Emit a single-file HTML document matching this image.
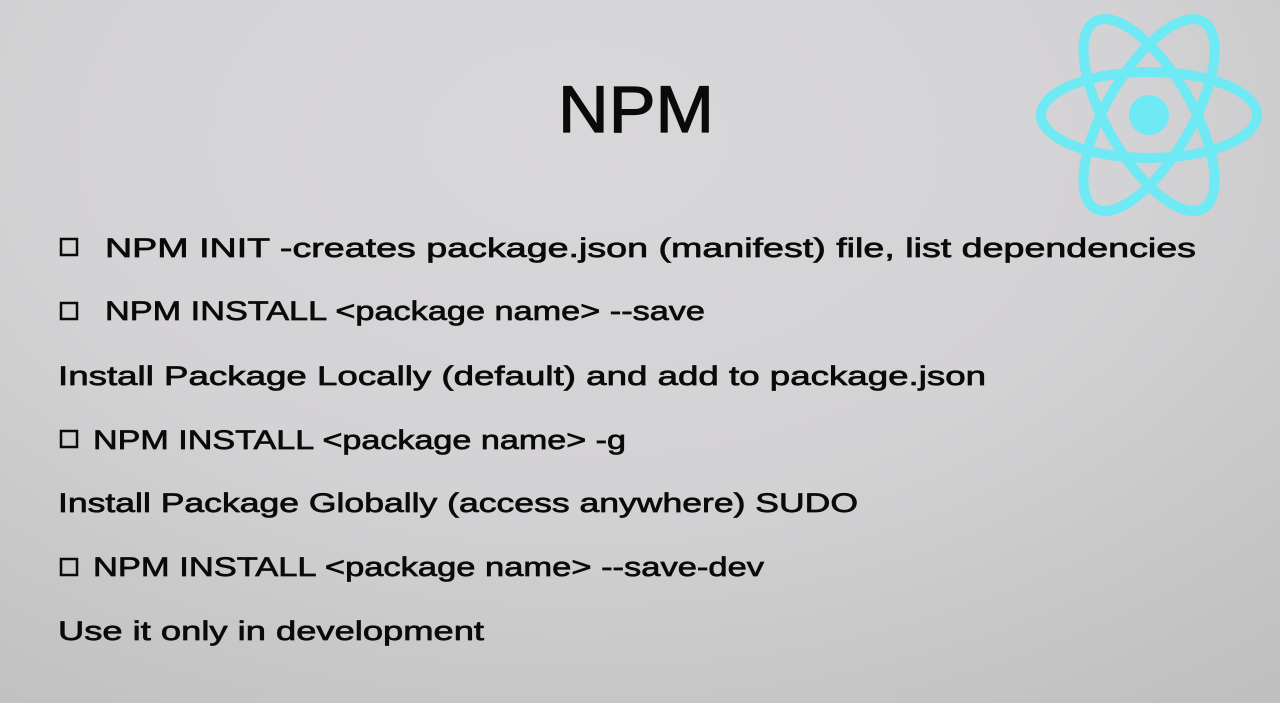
<!DOCTYPE html>
<html><head><style>
html,body{margin:0;padding:0;}
body{width:1280px;height:703px;overflow:hidden;background:radial-gradient(ellipse 1100px 700px at 45% 20%,#d8d7d9 0%,#d3d2d4 50%,#bfbfbf 100%);}
svg{position:absolute;left:0;top:0;}
text{font-family:"Liberation Sans",sans-serif;fill:#0a0a0a;font-size:27px;stroke:#0a0a0a;stroke-width:0.7;}
</style></head><body>
<svg width="1280" height="703" viewBox="0 0 1280 703">
<text x="558" y="132" style="font-size:66px;stroke-width:1.2" textLength="156" lengthAdjust="spacingAndGlyphs">NPM</text>
<g>
<rect x="61" y="239" width="16" height="16" fill="none" stroke="#0a0a0a" stroke-width="2.5"/>
<rect x="61" y="303" width="16" height="16" fill="none" stroke="#0a0a0a" stroke-width="2.5"/>
<rect x="61" y="431" width="16" height="16" fill="none" stroke="#0a0a0a" stroke-width="2.5"/>
<rect x="61" y="559" width="16" height="16" fill="none" stroke="#0a0a0a" stroke-width="2.5"/>
</g>
<text x="105" y="257" textLength="1091" lengthAdjust="spacingAndGlyphs">NPM INIT -creates package.json (manifest) file, list dependencies</text>
<text x="105" y="320" textLength="600" lengthAdjust="spacingAndGlyphs">NPM INSTALL &lt;package name&gt; --save</text>
<text x="58" y="385" textLength="928" lengthAdjust="spacingAndGlyphs">Install Package Locally (default) and add to package.json</text>
<text x="93" y="449" textLength="533" lengthAdjust="spacingAndGlyphs">NPM INSTALL &lt;package name&gt; -g</text>
<text x="58" y="512" textLength="800" lengthAdjust="spacingAndGlyphs">Install Package Globally (access anywhere) SUDO</text>
<text x="93" y="576" textLength="671" lengthAdjust="spacingAndGlyphs">NPM INSTALL &lt;package name&gt; --save-dev</text>
<text x="58" y="640" textLength="426" lengthAdjust="spacingAndGlyphs">Use it only in development</text>
<g transform="translate(1149,115)" fill="none" stroke="#6fe9f3" stroke-width="10">
<ellipse rx="108" ry="43"/>
<ellipse rx="108" ry="43" transform="rotate(60)"/>
<ellipse rx="108" ry="43" transform="rotate(120)"/>
<circle r="20" fill="#6fe9f3" stroke="none"/>
</g>
</svg>
</body></html>
